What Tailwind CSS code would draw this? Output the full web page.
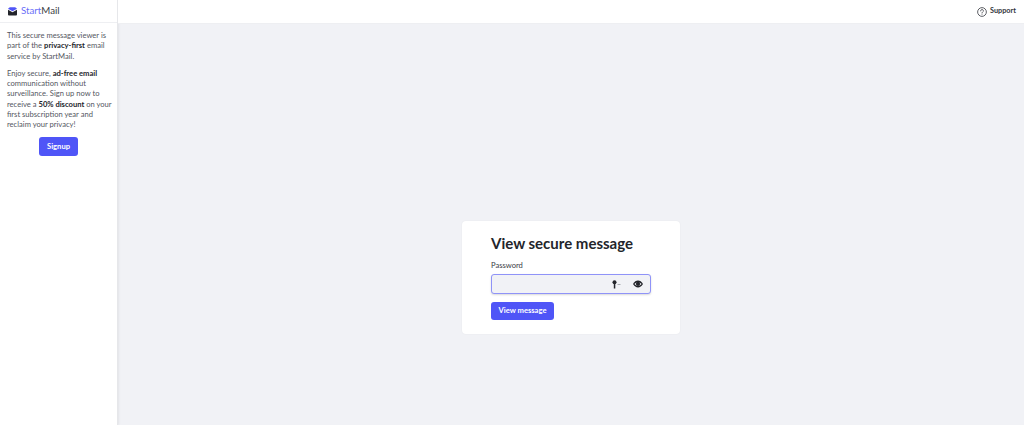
<!DOCTYPE html>
<html><head><meta charset="utf-8"><script src="https://cdn.jsdelivr.net/npm/@tailwindcss/browser@4"></script></head>
<body class="m-0">
<div class="flex h-[425px] w-[1024px] overflow-hidden bg-[#f1f2f6] font-['Lato',sans-serif] text-[#23252b]">
  <aside class="w-[118px] shrink-0 bg-white border-r border-[#e6e7ea] shadow-[1px_0_2px_rgba(0,0,0,0.06)] flex flex-col">
    <div class="h-[23px] flex items-center gap-[4px] pl-[8px] border-b border-[#eeeff2]">
      <svg width="9" height="10" viewBox="0 0 10 10"><path d="M2 .8h6L10 2.600 5 5.400 0 2.600z" fill="#4f55f7"/><path d="M0 3.600 5 6.400l5-2.800V9a1 1 0 0 1-1 1H1a1 1 0 0 1-1-1z" fill="#23252b"/></svg>
      <span class="text-[9.7px] leading-none"><span class="text-[#6a6ff8]">Start</span><span class="text-[#3a3c44]">Mail</span></span>
    </div>
    <div class="pl-[7px] pr-[4px] pt-[7px] text-[7.6px] leading-[10.3px] text-[#55575f]">
      <p>This secure message viewer is part of the <b class="font-bold text-[#23252b]">privacy-first</b> email service by StartMail.</p>
      <p class="mt-[7px]">Enjoy secure, <b class="font-bold text-[#23252b]">ad-free email</b> communication without surveillance. Sign up now to receive a <b class="font-bold text-[#23252b]">50% discount</b> on your first subscription year and reclaim your privacy!</p>
      <div class="flex justify-center pr-[3px] mt-[7px]">
        <div class="w-[39px] h-[19px] rounded-[3px] bg-[#4f55f7] text-white text-[7.6px] font-bold flex items-center justify-center">Signup</div>
      </div>
    </div>
  </aside>
  <div class="flex-1 flex flex-col min-w-0">
    <header class="h-[24px] shrink-0 bg-white border-b border-[#eeeff2] flex items-center justify-end gap-[3px] pr-[8px]">
      <svg width="10" height="10" viewBox="0 0 11 11" fill="none" stroke="#3a3c44" stroke-width=".9"><circle cx="5.500" cy="5.500" r="4.800"/><path d="M4 4.300a1.500 1.500 0 1 1 2.200 1.300c-.5.3-.7.6-.7 1.100" stroke-linecap="round"/><circle cx="5.500" cy="8.200" r=".5" fill="#3a3c44" stroke="none"/></svg>
      <span class="text-[7.3px] font-bold text-[#33353c]">Support</span>
    </header>
    <main class="flex-1 flex items-start justify-center pt-[197px]">
      <div class="w-[218px] h-[113px] rounded-[4px] bg-white shadow-[0_0_2px_rgba(0,0,0,0.06)] px-[29px] pt-[13px]">
        <h1 class="text-[15px] leading-[18px] font-bold text-[#23252b] whitespace-nowrap">View secure message</h1>
        <div class="mt-[8px] text-[7.6px] leading-[10px] text-[#3a3c44]">Password</div>
        <div class="mt-[4px] h-[20px] w-[160px] rounded-[3px] border border-[#8f93f8] bg-[#f1f2f6] shadow-[0_1px_2px_rgba(0,0,0,0.15)] flex items-center justify-end gap-[12px] pr-[7px]">
          <svg width="9" height="9" viewBox="0 0 9 9" fill="#23252b"><circle cx="2.500" cy="2.200" r="2"/><rect x="1.800" y="3" width="1.500" height="5.500"/><rect x="5.500" y="4" width="3" height=".8" fill="#9a9ca3"/></svg>
          <svg width="10" height="8" viewBox="0 0 11 8"><path d="M0 4C1.500 1.400 3.400.2 5.500.2S9.500 1.400 11 4C9.500 6.600 7.600 7.800 5.500 7.800S1.500 6.600 0 4Z" fill="#23252b"/><path d="M1.500 4C3 2.600 4.200 2 5.500 2S8 2.600 9.500 4C8 5.400 6.800 6 5.500 6S3 5.400 1.500 4Z" fill="#f1f2f6"/><circle cx="5.500" cy="3.900" r="2.300" fill="#23252b"/></svg>
        </div>
        <div class="mt-[8px] w-[63px] h-[18px] rounded-[3px] bg-[#4f55f7] text-white text-[7.6px] font-bold flex items-center justify-center whitespace-nowrap">View message</div>
      </div>
    </main>
  </div>
</div>
</body></html>
